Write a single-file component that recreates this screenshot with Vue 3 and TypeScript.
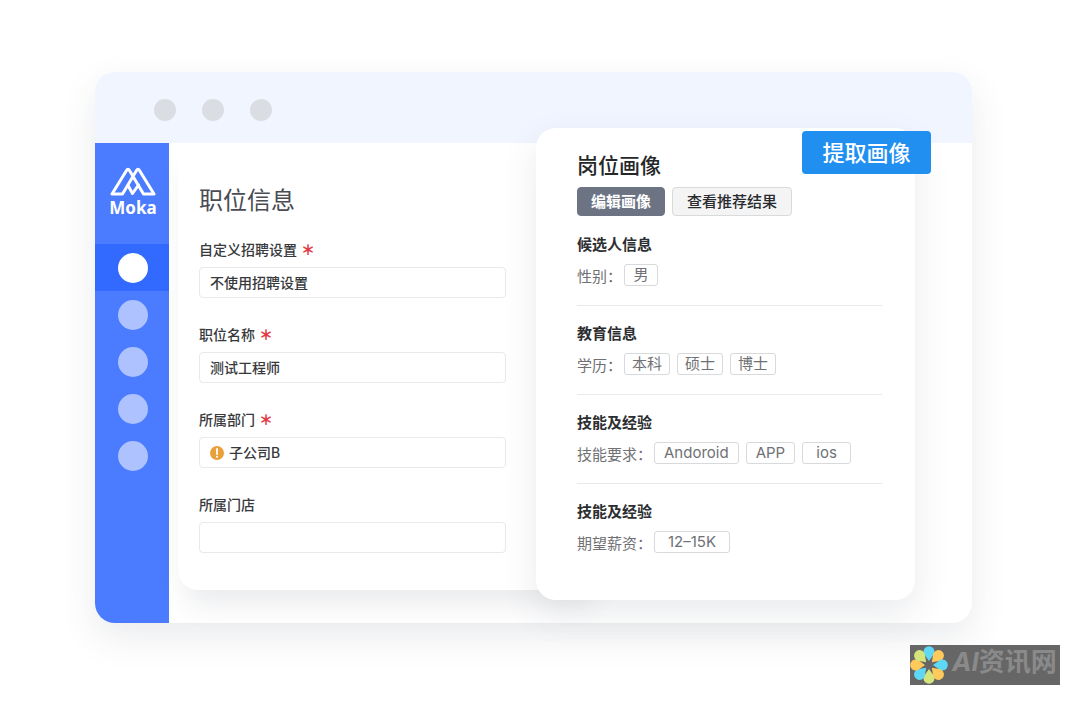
<script setup lang="ts">
import { ref } from 'vue'

interface Field {
  id: string
  label: string
  value: string
  required: boolean
  warning?: boolean
}

interface Section {
  title: string
  label: string
  tags: string[]
  kind?: 'latin' | 'range'
}

const fields = ref<Field[]>([
  { id: 'setting', label: '自定义招聘设置', value: '不使用招聘设置', required: true },
  { id: 'name', label: '职位名称', value: '测试工程师', required: true },
  { id: 'department', label: '所属部门', value: '子公司B', required: true, warning: true },
  { id: 'store', label: '所属门店', value: '', required: false },
])

const sections: Section[] = [
  { title: '候选人信息', label: '性别：', tags: ['男'] },
  { title: '教育信息', label: '学历：', tags: ['本科', '硕士', '博士'] },
  { title: '技能及经验', label: '技能要求：', tags: ['Andoroid', 'APP', 'ios'], kind: 'latin' },
  { title: '技能及经验', label: '期望薪资：', tags: ['12–15K'], kind: 'range' },
]

const active = ref(0)
const petals = ['#5fd8f5', '#ffc95c', '#5fd8f5', '#ffc95c', '#d5e57c', '#5fd8f5', '#ffc95c', '#d5e57c']
</script>

<template>
  <div class="page">
    <main class="window">
      <header class="titlebar">
        <span class="dot"></span>
        <span class="dot"></span>
        <span class="dot"></span>
      </header>
      <div class="body">
        <nav class="sidebar" aria-label="Moka">
          <div class="brand">
            <svg class="brand-mark" viewBox="0 0 46 29" aria-hidden="true">
              <g fill="none" stroke="#fff" stroke-width="3" stroke-linejoin="round" stroke-linecap="round">
                <path d="M2 27H12.500L26.500 3.500Q28 1 29.500 3.500L44 27H33.500L19.500 3.500Q18 1 16.500 3.500Z" />
                <path d="M18 18.500L22.500 26.500L28.500 18" />
              </g>
            </svg>
            <span class="brand-name">Moka</span>
          </div>
          <button
            v-for="n in 5"
            :key="n"
            type="button"
            class="nav-item"
            :class="{ active: active === n - 1 }"
            :aria-label="`${n}`"
            @click="active = n - 1"
          >
            <span class="nav-dot"></span>
          </button>
        </nav>

        <div class="workspace">
          <form class="job" @submit.prevent>
            <h1>职位信息</h1>
            <div v-for="field in fields" :key="field.id" class="field">
              <label :for="field.id">{{ field.label }}<span v-if="field.required" class="required">＊</span></label>
              <div class="control">
                <svg v-if="field.warning" class="warning" viewBox="0 0 14 14" aria-hidden="true">
                  <circle cx="7" cy="7" r="7" fill="#e9a03b" />
                  <path d="M7 2.800V8.200" stroke="#fff" stroke-width="1.800" stroke-linecap="round" />
                  <circle cx="7" cy="10.800" r="1" fill="#fff" />
                </svg>
                <input :id="field.id" v-model="field.value" type="text" />
              </div>
            </div>
          </form>

          <section class="portrait">
            <button type="button" class="extract">提取画像</button>
            <h2>岗位画像</h2>
            <div class="actions">
              <button type="button" class="action primary">编辑画像</button>
              <button type="button" class="action">查看推荐结果</button>
            </div>
            <div v-for="(section, i) in sections" :key="i" class="section">
              <h3>{{ section.title }}</h3>
              <div class="row">
                <span class="row-label">{{ section.label }}</span>
                <span class="tags">
                  <span v-for="tag in section.tags" :key="tag" class="tag" :class="section.kind">{{ tag }}</span>
                </span>
              </div>
            </div>
          </section>
        </div>
      </div>
    </main>

    <div class="watermark">
      <svg class="flower" viewBox="-19 -19 38 38" aria-hidden="true">
        <path
          v-for="(color, i) in petals"
          :key="i"
          d="M0 -4L-5 -11A5.500 5.500 0 1 1 5 -11Z"
          :fill="color"
          :transform="`rotate(${i * 45})`"
        />
      </svg>
      <span class="watermark-text"><em>AI</em>资讯网</span>
    </div>
  </div>
</template>

<style>
body {
  margin: 0;
  background: #fff;
}
</style>

<style scoped>
.page {
  box-sizing: border-box;
  position: relative;
  min-height: 100vh;
  padding: 72px 108px 82px 95px;
  color: #37393d;
  font-family: Inter, "Noto Sans CJK SC", sans-serif;
}

.window {
  border-radius: 20px;
  background: #fff;
  box-shadow: 0 14px 36px rgba(50, 60, 75, 0.1);
}

.titlebar {
  box-sizing: border-box;
  display: flex;
  align-items: center;
  gap: 26px;
  height: 71px;
  padding: 4px 59px 0;
  border-radius: 20px 20px 0 0;
  background: #f1f5ff;
}

.dot {
  width: 22px;
  height: 22px;
  border-radius: 50%;
  background: #dadde2;
}

.body {
  display: flex;
}

.sidebar {
  display: flex;
  flex: none;
  flex-direction: column;
  width: 74px;
  border-radius: 0 0 0 20px;
  background: #4b7bfe;
}

.brand {
  box-sizing: border-box;
  display: flex;
  flex-direction: column;
  align-items: center;
  height: 101px;
  padding-top: 24px;
  padding-left: 2px;
}

.brand-mark {
  width: 46px;
  height: 29px;
}

.brand-name {
  color: #fff;
  font: 700 17px/24px "Noto Sans", sans-serif;
}

.nav-item {
  display: flex;
  align-items: center;
  justify-content: center;
  height: 47px;
  padding: 0 0 0 2px;
  border: 0;
  background: none;
  cursor: pointer;
}

.nav-item.active {
  background: #326aff;
}

.nav-dot {
  width: 30px;
  height: 30px;
  border-radius: 50%;
  background: #adc2ff;
}

.active .nav-dot {
  background: #fff;
}

.workspace {
  display: flex;
  flex: 1;
  align-items: flex-start;
  min-width: 0;
  padding: 0 57px 0 9px;
}

.job {
  box-sizing: border-box;
  flex: 1;
  min-width: 0;
  margin-bottom: 33px;
  padding: 42px 94px 37px 21px;
  border-radius: 0 0 20px 20px;
  background: #fff;
  box-shadow: 0 22px 28px -8px rgba(50, 60, 75, 0.1);
}

h1,
h2,
h3 {
  margin: 0;
}

h1 {
  margin-bottom: 23px;
  color: #494c53;
  font-size: 24px;
  font-weight: 400;
  line-height: 32px;
}

.field + .field {
  margin-top: 27px;
}

.field label {
  display: flex;
  align-items: center;
  gap: 4px;
  margin-bottom: 7px;
  font-size: 14px;
  font-weight: 500;
  line-height: 20px;
}

.required {
  color: #e23b46;
  font-weight: 900;
}

.control {
  box-sizing: border-box;
  display: flex;
  align-items: center;
  gap: 5px;
  height: 31px;
  padding: 0 10px;
  border: 1px solid #e8e9eb;
  border-radius: 4px;
}

.control input {
  flex: 1;
  min-width: 0;
  padding: 0;
  border: 0;
  outline: 0;
  background: none;
  color: inherit;
  font: inherit;
  font-size: 14px;
  font-weight: 500;
  line-height: 20px;
}

.warning {
  flex: none;
  width: 14px;
  height: 14px;
}

.portrait {
  box-sizing: border-box;
  position: relative;
  flex: none;
  width: 379px;
  margin: -15px 0 23px -64px;
  padding: 24px 33px 45px 41px;
  border-radius: 20px;
  background: #fff;
  box-shadow: 0 14px 36px rgba(50, 60, 75, 0.1);
}

.extract {
  position: absolute;
  top: 3px;
  right: -16px;
  width: 129px;
  height: 43px;
  padding: 0 0 4px;
  border: 0;
  border-radius: 4px;
  background: #218ff0;
  color: #fff;
  font: inherit;
  font-size: 22px;
  font-weight: 500;
  cursor: pointer;
}

h2 {
  color: #252729;
  font-size: 21px;
  font-weight: 500;
  line-height: 28px;
}

.actions {
  display: flex;
  gap: 7px;
  margin: 7px 0 19px;
}

.action {
  height: 29px;
  padding: 0 14px;
  border: 1px solid #d9dadc;
  border-radius: 4px;
  background: #f4f4f5;
  color: #292b2e;
  font: inherit;
  font-size: 15px;
  font-weight: 500;
  line-height: 20px;
  cursor: pointer;
}

.action.primary {
  padding: 0 13px;
  border-color: #6c7484;
  background: #6c7484;
  color: #fff;
  font-weight: 700;
}

.section + .section {
  margin-top: 17px;
  padding-top: 18px;
  border-top: 1px solid #e8e9ea;
}

h3 {
  margin-bottom: 9px;
  color: #2c2e31;
  font-size: 15px;
  font-weight: 700;
  line-height: 20px;
}

.row {
  display: flex;
  align-items: flex-start;
  gap: 2px;
  color: #6f7174;
  font-size: 15px;
  line-height: 22px;
}

.row-label {
  padding-top: 2px;
}

.tags {
  display: flex;
  gap: 7px;
}

.tag {
  box-sizing: border-box;
  min-width: 34px;
  padding: 0 7px;
  border: 1px solid #d8d9db;
  border-radius: 3px;
  line-height: 20px;
  text-align: center;
}

.tag.latin {
  min-width: 49px;
  padding: 0 9px;
}

.tag.range {
  padding: 0 13px;
}

.watermark {
  position: absolute;
  right: 20px;
  bottom: 20px;
  display: flex;
  align-items: flex-start;
  gap: 4px;
  width: 150px;
  height: 40px;
  background: #666;
  color: #8a8a8a;
}

.flower {
  flex: none;
  width: 38px;
  height: 38px;
  margin-top: 1px;
}

.watermark-text {
  font-size: 26px;
  font-weight: 700;
  line-height: 34px;
  white-space: nowrap;
}
</style>
